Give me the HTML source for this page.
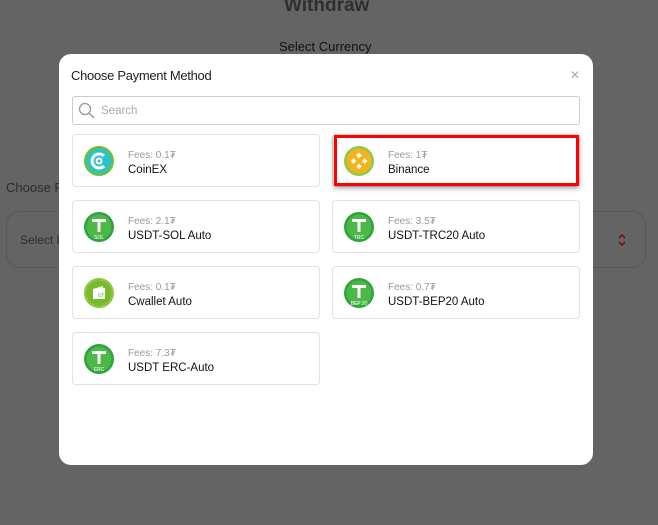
<!DOCTYPE html>
<html><head><meta charset="utf-8"><style>
*{box-sizing:border-box;margin:0;padding:0}
body{width:658px;height:525px;overflow:hidden;background:#636463;font-family:"Liberation Sans",sans-serif;position:relative}
.bg{position:absolute;color:#2a2a2a}
.modal{position:absolute;left:59px;top:54px;width:534px;height:411px;background:#fff;border-radius:12px}
.title{position:absolute;left:12px;top:14px;font-size:13px;color:#222;letter-spacing:-0.3px}
.close{position:absolute;right:13px;top:14px;font-size:12px;color:#aaa}
.search{position:absolute;left:13px;top:42px;width:508px;height:29px;border:1px solid #ccc;border-radius:3px}
.search span{position:absolute;left:28px;top:8px;font-size:11.5px;color:#aaa}
.card{position:absolute;width:248px;height:53px;border:1px solid #e2e2e2;border-radius:4px;background:#fff}
.card svg{position:absolute;left:10px;top:10px}
.card .f{position:absolute;left:55px;top:15px;font-size:10px;color:#999}
.card .n{position:absolute;left:55px;top:29px;font-size:11.5px;color:#111}
.sel{position:absolute;left:334px;top:135px;width:245px;height:51px;border:3px solid #f00;box-shadow:0 2px 5px rgba(0,0,0,.4)}
</style></head><body>
<div class="bg" style="left:284px;top:-5px;font-size:19px;font-weight:bold;color:#2f2f2f">Withdraw</div>
<div class="bg" style="left:279px;top:39px;font-size:13px;color:#111">Select Currency</div>
<div class="bg" style="left:6px;top:180px;font-size:13px;color:#2e2e2e">Choose P</div>
<div style="position:absolute;left:6px;top:211px;width:640px;height:57px;border:1px solid #585858;border-radius:14px"></div>
<div class="bg" style="left:20px;top:233px;font-size:12px;color:#2e2e2e">Select P</div>
<svg style="position:absolute;left:617px;top:232px" width="10" height="16"><path d="M2 6l3-3 3 3M2 10l3 3 3-3" fill="none" stroke="#8b0000" stroke-width="1.5"/></svg>
<div class="modal">
<div class="title">Choose Payment Method</div>
<div class="close">✕</div>
<div class="search"><svg width="18" height="18" style="position:absolute;left:5px;top:5px"><circle cx="7" cy="7" r="5.5" fill="none" stroke="#999" stroke-width="1.3"/><line x1="11" y1="11" x2="16" y2="16" stroke="#999" stroke-width="1.5"/></svg><span>Search</span></div>
</div>
<div class="card" style="left:72px;top:134px"><svg width="32" height="32"><circle cx="16" cy="16" r="15" fill="#6ebd3a"/><circle cx="16" cy="16" r="12.5" fill="#2bc3c8"/><path d="M21 11a7 7 0 1 0 0 10" fill="none" stroke="#fff" stroke-width="3"/><circle cx="16" cy="16" r="2.5" fill="none" stroke="#fff" stroke-width="2"/></svg><div class="f">Fees: 0.1₮</div><div class="n">CoinEX</div></div>
<div class="card" style="left:332px;top:134px"><svg width="32" height="32"><circle cx="16" cy="16" r="15" fill="#8fc84a"/><circle cx="16" cy="16" r="12.5" fill="#f3b51b"/><g fill="#fff"><rect x="14" y="8.5" width="4" height="4" transform="rotate(45 16 10.5)"/><rect x="14" y="19.5" width="4" height="4" transform="rotate(45 16 21.5)"/><rect x="8.5" y="14" width="4" height="4" transform="rotate(45 10.5 16)"/><rect x="19.5" y="14" width="4" height="4" transform="rotate(45 21.5 16)"/></g></svg><div class="f">Fees: 1₮</div><div class="n">Binance</div></div>
<div class="sel"></div>
<div class="card" style="left:72px;top:200px"><svg width="32" height="32"><circle cx="16" cy="16" r="15" fill="#2fa33f"/><circle cx="16" cy="16" r="12.5" fill="#4cb848"/><path d="M9 8h14v3h-5.5v10h-3v-10H9z" fill="#fff"/><text x="16" y="28" font-size="5" fill="#fff" text-anchor="middle" font-family="Liberation Sans">SOL</text></svg><div class="f">Fees: 2.1₮</div><div class="n">USDT-SOL Auto</div></div>
<div class="card" style="left:332px;top:200px"><svg width="32" height="32"><circle cx="16" cy="16" r="15" fill="#2fa33f"/><circle cx="16" cy="16" r="12.5" fill="#4cb848"/><path d="M9 8h14v3h-5.5v10h-3v-10H9z" fill="#fff"/><text x="16" y="28" font-size="5" fill="#fff" text-anchor="middle" font-family="Liberation Sans">TRC</text></svg><div class="f">Fees: 3.5₮</div><div class="n">USDT-TRC20 Auto</div></div>
<div class="card" style="left:72px;top:266px"><svg width="32" height="32"><circle cx="16" cy="16" r="15" fill="#8cc63f"/><circle cx="16" cy="16" r="12.5" fill="#7ab830"/><path d="M10 12l10-3v2h2v11H10z" fill="#fff"/><text x="15" y="20" font-size="6" fill="#8cc63f" font-family="Liberation Sans" font-weight="bold">cf</text></svg><div class="f">Fees: 0.1₮</div><div class="n">Cwallet Auto</div></div>
<div class="card" style="left:332px;top:266px"><svg width="32" height="32"><circle cx="16" cy="16" r="15" fill="#2fa33f"/><circle cx="16" cy="16" r="12.5" fill="#4cb848"/><path d="M9 8h14v3h-5.5v10h-3v-10H9z" fill="#fff"/><text x="16" y="28" font-size="5" fill="#fff" text-anchor="middle" font-family="Liberation Sans">BEP 20</text></svg><div class="f">Fees: 0.7₮</div><div class="n">USDT-BEP20 Auto</div></div>
<div class="card" style="left:72px;top:332px"><svg width="32" height="32"><circle cx="16" cy="16" r="15" fill="#2fa33f"/><circle cx="16" cy="16" r="12.5" fill="#4cb848"/><path d="M9 8h14v3h-5.5v10h-3v-10H9z" fill="#fff"/><text x="16" y="28" font-size="5" fill="#fff" text-anchor="middle" font-family="Liberation Sans">ERC</text></svg><div class="f">Fees: 7.3₮</div><div class="n">USDT ERC-Auto</div></div>
</body></html>
